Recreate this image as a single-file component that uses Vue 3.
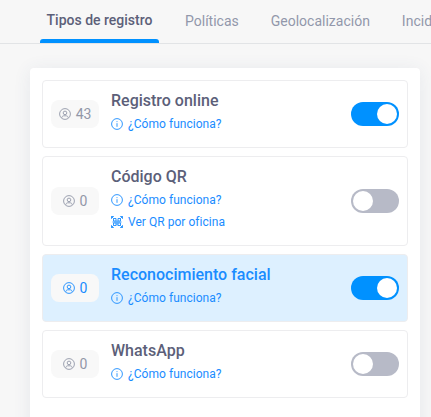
<!-- RegistroTipos -->

<script setup>
  import { ref } from 'vue'

  const tabs = ['Tipos de registro', 'Políticas', 'Geolocalización', 'Incid']
  const active_tab = ref ( tabs[0] )

  const types = ref ([
    { name: 'Registro online', users: 43, enabled: true },
    { name: 'Código QR', users: 0, enabled: false, qr: true },
    { name: 'Reconocimiento facial', users: 0, enabled: true, selected: true },
    { name: 'WhatsApp', users: 0, enabled: false },
  ])

  const toggle = type => {
    type.enabled = !type.enabled
  }
</script>

<template>
  <div class="page">
    <nav class="tabs">
      <a
        v-for="tab in tabs"
        :key="tab"
        class="tab"
        :class="{ active: tab === active_tab }"
        @click="active_tab = tab"
        >{{ tab }}</a>
    </nav>

    <section class="panel">
      <article
        v-for="type in types"
        :key="type.name"
        class="card"
        :class="{ selected: type.selected }"
        >
        <div class="badge">
          <svg class="icon" viewBox="0 0 12 12">
            <circle cx="6" cy="6" r="5.4" />
            <circle cx="6" cy="4.9" r="1.8" />
            <path d="M2.9 9.7V9.2C3.2 8.2 4.2 7.8 4.8 7.8H7.2C7.8 7.8 8.8 8.2 9.1 9.2V9.7" />
          </svg>
          <span>{{ type.users }}</span>
        </div>

        <div class="info">
          <h2>{{ type.name }}</h2>
          <a class="link">
            <svg class="icon" viewBox="0 0 12 12">
              <circle cx="6" cy="6" r="5.4" />
              <path d="M6 5.2V8.8M6 3.2V4.1" />
            </svg>
            <span>¿Cómo funciona?</span>
          </a>
          <a v-if="type.qr" class="link">
            <svg class="icon" viewBox="0 0 12 12">
              <path d="M.5 2.8V.5H2.8M9.2 .5H11.5V2.8M11.5 9.2V11.5H9.2M2.8 11.5H.5V9.2" />
              <path d="M2.5 2.5H5V5H2.5ZM7 2.5H9.5V5H7ZM2.5 7H5V9.5H2.5ZM7 7H9.5V9.5H7Z" />
              <path d="M1.5 6H10.5M6 4.5V9.5M.5 .5L2.5 2.5M11.5 .5L9.5 2.5M.5 11.5L2.5 9.5M11.5 11.5L9.5 9.5" />
            </svg>
            <span>Ver QR por oficina</span>
          </a>
        </div>

        <button
          class="switch"
          :class="{ on: type.enabled }"
          :aria-label="type.name"
          @click="toggle ( type )"
          >
          <span class="knob"></span>
        </button>
      </article>
    </section>
  </div>
</template>

<style>
  body {
    background: #f7f7f7;
    overflow: hidden;
  }
</style>

<style scoped>
  .page {
    height: 417px;
    overflow: hidden;
    font-family: Roboto, "Liberation Sans", sans-serif;
    color: #5c5f79;
  }

  .tabs {
    display: flex;
    gap: 20px;
    box-sizing: border-box;
    height: 44px;
    padding-left: 40px;
    border-bottom: 1px solid #e2e4e6;
  }
  .tab {
    flex: none;
    box-sizing: border-box;
    height: 43px;
    padding: 11px 6px 0;
    font-size: 14px;
    line-height: 20px;
    color: #9297ab;
    cursor: pointer;
  }
  .tab.active {
    display: flex;
    flex-direction: column;
    justify-content: space-between;
    padding: 10px 0 0;
    font-weight: 500;
    color: #5c5f79;
    text-align: center;
    width: 119px;
  }
  .tab.active::after {
    content: "";
    height: 4px;
    border-radius: 3px 3px 0 0;
    background: #0091ff;
  }

  .panel {
    display: flex;
    flex-direction: column;
    gap: 8px;
    box-sizing: border-box;
    width: 390px;
    height: 380px;
    margin: 24px 0 0 30px;
    padding: 12px;
    border-radius: 4px;
    background: #fff;
    box-shadow: 0 2px 18px rgba(60, 75, 120, .09);
  }

  .card {
    display: flex;
    align-items: center;
    padding: 0 8px;
    border: 1px solid #ededef;
    border-radius: 4px;
  }
  .card.selected {
    background: #ddf0ff;
  }

  .badge {
    display: flex;
    align-items: center;
    justify-content: center;
    gap: 5px;
    width: 48px;
    height: 28px;
    border-radius: 8px;
    background: #f8f8f8;
    font-size: 14px;
    color: #9297a8;
  }

  .info {
    flex: 1;
    padding: 8px 0 12px 12px;
  }
  .info h2 {
    margin: 0;
    font-size: 16px;
    font-weight: 500;
    line-height: 24px;
  }

  .link {
    display: flex;
    align-items: center;
    gap: 5px;
    height: 22px;
    font-size: 12px;
    letter-spacing: .04px;
    color: #1a8cff;
    cursor: pointer;
  }

  .selected .badge,
  .selected h2 {
    color: #1a8cff;
  }

  .icon {
    flex: none;
    width: 12px;
    height: 12px;
    fill: none;
    stroke: currentColor;
    stroke-width: .9;
  }

  .switch {
    display: flex;
    width: 48px;
    height: 24px;
    padding: 2px;
    border: 0;
    border-radius: 12px;
    background: #b7bac7;
    cursor: pointer;
  }
  .switch.on {
    justify-content: flex-end;
    background: #0091ff;
  }
  .knob {
    width: 20px;
    height: 20px;
    border-radius: 50%;
    background: #fff;
  }
</style>
